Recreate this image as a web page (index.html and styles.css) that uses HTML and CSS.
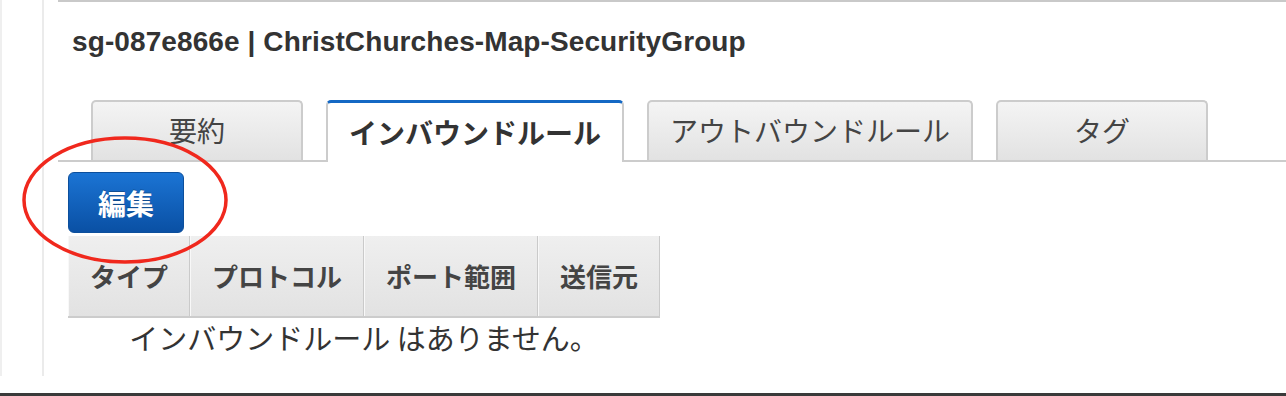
FILE: index.html
```html
<!DOCTYPE html>
<html lang="ja">
<head>
<meta charset="utf-8">
<title>Security Group</title>
<link rel="stylesheet" href="styles.css">
</head>
<body>
<div class="frame">
  <div class="gutter"></div>
  <div class="panel">
    <h2 class="title">sg-087e866e | ChristChurches-Map-SecurityGroup</h2>
    <div class="tabs">
      <div class="tab">要約</div>
      <div class="tab tab-active">インバウンドルール</div>
      <div class="tab">アウトバウンドルール</div>
      <div class="tab">タグ</div>
    </div>
    <div class="pane">
      <button class="btn-edit">編集</button>
      <div class="rules">
        <div class="rules-head">
          <div class="rules-cell">タイプ</div>
          <div class="rules-cell">プロトコル</div>
          <div class="rules-cell">ポート範囲</div>
          <div class="rules-cell">送信元</div>
        </div>
        <div class="rules-empty">インバウンドルール はありません。</div>
      </div>
    </div>
  </div>
</div>
<div class="bottom-bar"></div>
<svg class="annotation" width="260" height="290" viewBox="0 0 260 290">
  <ellipse cx="125" cy="200" rx="101" ry="62" fill="none" stroke="#f0281d" stroke-width="3.5"/>
</svg>
</body>
</html>
```
FILE: styles.css
```css
html, body {
  margin: 0;
  padding: 0;
  background: #ffffff;
}

body {
  position: relative;
  width: 1286px;
  height: 396px;
  overflow: hidden;
  font-family: "Liberation Sans", "Noto Sans CJK JP", sans-serif;
  color: #333333;
}

.frame {
  display: flex;
  height: 376px;
}

.gutter {
  width: 40px;
  flex: none;
  border-left: 2px solid #efefef;
  border-right: 2px solid #ebebeb;
}

.panel {
  flex: 1;
  margin-left: 14px;
  border-top: 2px solid #c9c9c9;
  display: flex;
  flex-direction: column;
}

.title {
  margin: 23px 0 0 14px;
  font-size: 28px;
  line-height: 34px;
  font-weight: bold;
  letter-spacing: 0.1px;
  color: #333333;
}

.tabs {
  display: flex;
  gap: 23px;
  margin-top: 41px;
  padding-left: 33px;
  border-bottom: 2px solid #cccccc;
  height: 60px;
}

.tab {
  box-sizing: border-box;
  min-width: 212px;
  height: 60px;
  padding: 0 21px;
  border: 2px solid #cccccc;
  border-bottom: none;
  border-radius: 5px 5px 0 0;
  background: linear-gradient(#f4f4f4, #e2e2e2);
  font-family: "Noto Sans CJK JP", sans-serif;
  font-size: 28px;
  line-height: 56px;
  text-align: center;
  color: #444444;
  white-space: nowrap;
}

.tab-active {
  height: 62px;
  border-top: 3px solid #1468c4;
  background: #ffffff;
  font-weight: bold;
  color: #333333;
  line-height: 58px;
}

.pane {
  padding-left: 10px;
  display: flex;
  flex-direction: column;
  align-items: flex-start;
}

.btn-edit {
  margin-top: 10px;
  width: 116px;
  height: 61px;
  border: 1px solid #0c4f9c;
  border-radius: 6px;
  background: linear-gradient(#1b74d4, #0a50a4);
  color: #ffffff;
  font-family: "Noto Sans CJK JP", sans-serif;
  font-size: 28px;
  font-weight: bold;
  padding: 0;
  text-shadow: 0 -1px 0 rgba(0, 0, 0, 0.25);
}

.rules {
  margin-top: 3px;
  width: 592px;
}

.rules-head {
  display: flex;
  height: 80px;
  border-bottom: 2px solid #cccccc;
}

.rules-cell {
  box-sizing: border-box;
  flex: auto;
  padding: 0 20px;
  background: linear-gradient(#efefef, #e2e2e2);
  border-left: 1px solid #f8f8f8;
  border-right: 1px solid #cacaca;
  font-family: "Noto Sans CJK JP", sans-serif;
  font-size: 26px;
  font-weight: bold;
  line-height: 80px;
  text-align: center;
  color: #444444;
  white-space: nowrap;
}

.rules-empty {
  font-family: "Noto Sans CJK JP", sans-serif;
  font-size: 29px;
  line-height: 38px;
  text-align: center;
  color: #333333;
}

.bottom-bar {
  margin-top: 17px;
  height: 3px;
  background: #3a3a3a;
}

.annotation {
  position: absolute;
  left: 0;
  top: 0;
  pointer-events: none;
}
```
